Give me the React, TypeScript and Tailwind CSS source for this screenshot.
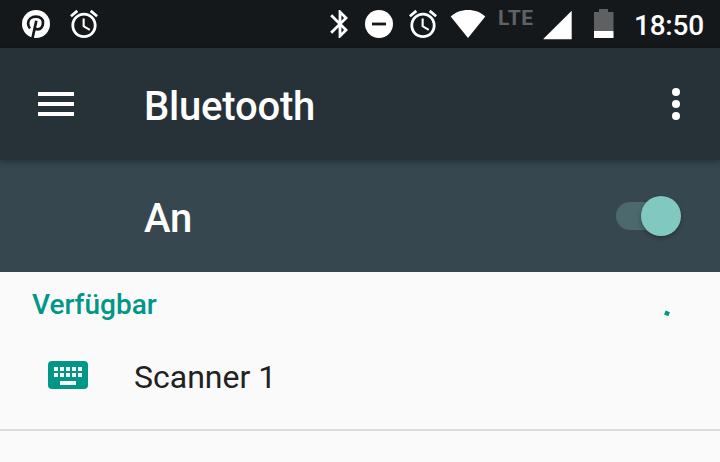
import React from "react";

function PinterestIcon() {
  return (
    <svg className="h-7 w-7 shrink-0" viewBox="0 0 28 28">
      <circle cx="14" cy="14" r="14" fill="#fff" />
      <path
        d="M8 18.300C6.800 17 6 15.200 6.100 13.200C6.200 9.300 9.500 6.600 14 6.600C18.300 6.600 21 9.300 21 12.600C21 16.400 18.800 19.400 15.800 19.400C14.200 19.400 13 18.600 12.600 17.400M14.300 10.800L10.400 28.500"
        fill="none"
        stroke="#14181b"
        strokeWidth="2.700"
      />
    </svg>
  );
}

function AlarmIcon() {
  return (
    <svg className="h-[34px] w-[34px] shrink-0" viewBox="0 0 34 34" fill="#fff">
      <path
        transform="translate(0.2 0.2) scale(1.4)"
        d="M22 5.720l-4.600-3.860-1.290 1.530 4.600 3.860L22 5.720zM7.880 3.390L6.600 1.860 2 5.710l1.290 1.530 4.590-3.850zM12.500 8H11v6l4.750 2.850.75-1.230-4-2.370V8zM12 4c-4.970 0-9 4.030-9 9s4.020 9 9 9c4.970 0 9-4.030 9-9s-4.030-9-9-9zm0 16c-3.870 0-7-3.130-7-7s3.130-7 7-7 7 3.130 7 7-3.130 7-7 7z"
      />
    </svg>
  );
}

function BluetoothIcon() {
  return (
    <svg className="h-[34px] w-[34px] shrink-0" viewBox="0 0 34 34" fill="#fff">
      <path
        transform="translate(0.2 0.2) scale(1.4)"
        d="M17.710 7.710L12 2h-1v7.590L6.410 5 5 6.410 10.590 12 5 17.590 6.410 19 11 14.410V22h1l5.710-5.710-4.300-4.290 4.300-4.290zM13 5.830l1.880 1.880L13 9.590V5.830zm1.880 10.460L13 18.170v-3.760l1.880 1.880z"
      />
    </svg>
  );
}

function StatusBar() {
  return (
    <div className="flex h-12 items-center bg-[#14181b] pr-4 pl-[22px]">
      <PinterestIcon />
      <div className="ml-[17px]">
        <AlarmIcon />
      </div>
      <div className="ml-auto flex h-12 items-center">
        <BluetoothIcon />
        <svg className="ml-2 h-7 w-7" viewBox="0 0 28 28">
          <circle cx="14" cy="14" r="14" fill="#fff" />
          <rect x="7" y="12.600" width="14" height="2.800" fill="#14181b" />
        </svg>
        <div className="ml-[13px]">
          <AlarmIcon />
        </div>
        <svg className="ml-[10px] h-7 w-[36px]" viewBox="0 0 36 28" fill="#fff">
          <path d="M18 28 L.7 6.400 C5.500 2.200 11 0 18 0 C25 0 30.500 2.200 35.300 6.400Z" />
        </svg>
        <span className="ml-3 h-12 w-[36px] pt-[6px] font-[Roboto,sans-serif] text-[21px] leading-[25px] font-bold tracking-[0.6px] text-[#606264]">
          LTE
        </span>
        <svg className="ml-[9px] h-12 w-[30px]" viewBox="0 0 30 48" fill="#fff">
          <path d="M.5 39.300V38.800L28.700 10.800V39.300Z" />
        </svg>
        <svg className="ml-[21px] h-12 w-5" viewBox="0 0 20 48">
          <path d="M0 12h5V9h9v3h5.500v19H0z" fill="#5e6062" />
          <path d="M0 31h19.500v7H0z" fill="#fff" />
        </svg>
        <span className="ml-5 w-[70px] pt-[3px] font-[Roboto,sans-serif] text-[28px] leading-8 font-medium tracking-[-0.25px] text-white">
          18:50
        </span>
      </div>
    </div>
  );
}

export default function App() {
  return (
    <div className="flex h-[462px] w-[720px] flex-col overflow-hidden bg-[#fafafa] font-[Roboto,sans-serif]">
      <StatusBar />
      <header className="relative flex h-28 items-center bg-[#263238] pr-10 pl-[38px] shadow-[0_2px_6px_rgba(0,0,0,0.3)]">
        <div className="flex w-9 flex-col gap-2">
          <div className="h-1 bg-white" />
          <div className="-my-0.5 h-1 bg-white" />
          <div className="h-1 bg-white" />
        </div>
        <h1 className="ml-[70px] pt-[6px] text-[40px] leading-[48px] font-medium tracking-[-0.2px] text-white">
          Bluetooth
        </h1>
        <div className="ml-auto flex flex-col gap-1">
          <div className="h-2 w-2 rounded-full bg-white" />
          <div className="h-2 w-2 rounded-full bg-white" />
          <div className="h-2 w-2 rounded-full bg-white" />
        </div>
      </header>
      <section className="flex h-28 items-center justify-between bg-[#37474f] pr-[39px] pl-36">
        <span className="pt-[6px] text-[40px] leading-[48px] font-medium tracking-[-0.2px] text-white">An</span>
        <div className="flex h-7 w-[65px] items-center justify-end">
          <div className="-mr-5 h-7 w-[45px] rounded-l-full bg-[#4c696d]" />
          <div className="z-10 h-10 w-10 shrink-0 rounded-full bg-[#80c8c0] shadow-[0_2px_4px_rgba(0,0,0,0.3)]" />
        </div>
      </section>
      <main>
        <div className="flex h-[66px] items-start justify-between pr-[49px] pl-8 text-[#009688]">
          <h2 className="pt-[17px] text-[28px] leading-8 font-medium">Verfügbar</h2>
          <svg className="mt-[38px] h-[7px] w-[7px]" viewBox="0 0 7 7">
            <rect x="0.700" y="1.500" width="4.600" height="4.200" fill="#009688" transform="rotate(22 3.500 3.500)" />
          </svg>
        </div>
        <div className="flex h-[93px] border-b-2 border-[#dcdcdc] pl-12">
          <svg className="mt-[23px] h-7 w-10" viewBox="0 0 40 28">
            <rect width="40" height="28" rx="4" fill="#009688" />
            <path
              fill="#fafafa"
              d="M6 6h4v4H6zM12 6h4v4h-4zM18 6h4v4h-4zM24 6h4v4h-4zM30 6h4v4h-4zM6 12h4v4H6zM12 12h4v4h-4zM18 12h4v4h-4zM24 12h4v4h-4zM30 12h4v4h-4zM12 20h16v4H12z"
            />
          </svg>
          <span className="ml-[46px] pt-5 text-[32px] leading-[38px] text-[#212121]">Scanner 1</span>
        </div>
      </main>
    </div>
  );
}
